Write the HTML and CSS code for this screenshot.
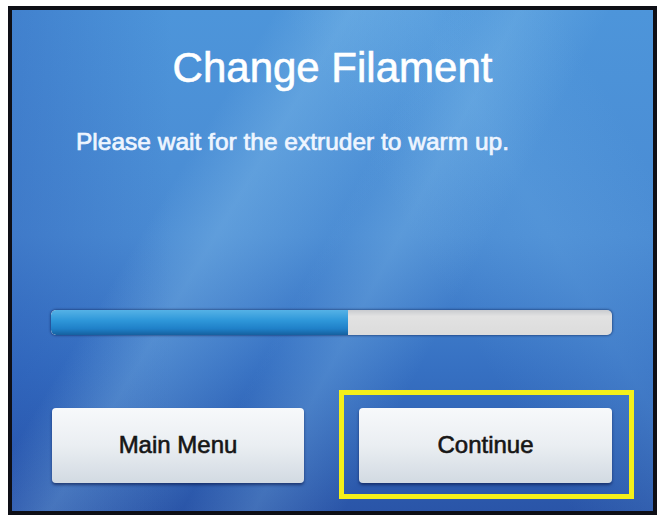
FILE: index.html
```html
<!DOCTYPE html>
<html lang="en">
<head>
    <meta charset="UTF-8">
    <meta name="viewport" content="width=device-width, initial-scale=1.0">
    <title>Change Filament</title>
    <link rel="stylesheet" href="styles.css">
</head>
<body>

    <div class="frame">
        <div class="screen">
            <h1 class="title">Change Filament</h1>
            <p class="message">Please wait for the extruder to warm up.</p>

            <div class="progress">
                <div class="progress-fill" style="width: 53%"></div>
            </div>

            <div class="buttons">
                <button class="btn btn-menu">Main Menu</button>
                <div class="highlight">
                    <button class="btn">Continue</button>
                </div>
            </div>
        </div>
    </div>

</body>
</html>
```

FILE: styles.css
```css
html, body {
    margin: 0;
    padding: 0;
    background-color: #fff;
    font-family: "Liberation Sans", Arial, sans-serif;
}
.frame {
    margin: 6px 5px 0 8px;
    border: 4px solid #0e0f16;
}
.screen {
    height: 501px;
    box-sizing: border-box;
    padding-top: 37px;
    background:
        linear-gradient(121deg, transparent 28%, rgba(150, 205, 240, 0.28) 36%, rgba(150, 205, 240, 0.12) 44%, transparent 50%),
        linear-gradient(118deg, transparent 48%, rgba(150, 205, 240, 0.22) 56%, transparent 66%),
        linear-gradient(60deg, transparent 60%, rgba(120, 185, 235, 0.18) 75%, transparent 90%),
        linear-gradient(90deg, rgba(30, 70, 170, 0.25) 0%, transparent 25%),
        linear-gradient(180deg, #4d95da 0%, #4a8bd3 45%, #3670c2 72%, #2a55a8 100%);
}
.title {
    margin: 0;
    text-align: center;
    color: #fff;
    font-size: 42px;
    font-weight: normal;
    line-height: 1;
    -webkit-text-stroke: 0.6px #fff;
}
.message {
    margin: 41px 0 0 64px;
    color: #eef5ff;
    font-size: 24.5px;
    font-weight: normal;
    line-height: 1;
    -webkit-text-stroke: 0.7px #eef5ff;
}
.progress {
    margin: 155px 0 0 39px;
    width: 561px;
    height: 25px;
    border-radius: 5px;
    background: linear-gradient(180deg, #c9cbcf 0%, #e2e2e2 25%, #dcdcdc 100%);
    box-shadow: 0 0 2px 1px rgba(10, 30, 80, 0.45);
    overflow: hidden;
}
.progress-fill {
    height: 100%;
    border-radius: 5px 0 0 5px;
    background: linear-gradient(180deg, #55b2e6 0%, #2f98da 40%, #1f80c8 75%, #15609f 100%);
}
.buttons {
    display: flex;
    align-items: flex-start;
    gap: 35px;
    margin-top: 55px;
    padding-left: 40px;
}
.btn {
    width: 253px;
    height: 75px;
    border: none;
    border-radius: 4px;
    background: linear-gradient(180deg, #f7f9fb 0%, #eaeef2 50%, #d2dae2 100%);
    box-shadow: 0 2px 3px rgba(5, 15, 60, 0.55);
    color: #161616;
    font-family: inherit;
    font-size: 24px;
    -webkit-text-stroke: 0.6px #161616;
    cursor: pointer;
}
.btn-menu {
    width: 252px;
    margin-top: 18px;
}
.highlight {
    border: 5px solid #f4f01a;
    padding: 13px 17px 11px 15px;
}
```
